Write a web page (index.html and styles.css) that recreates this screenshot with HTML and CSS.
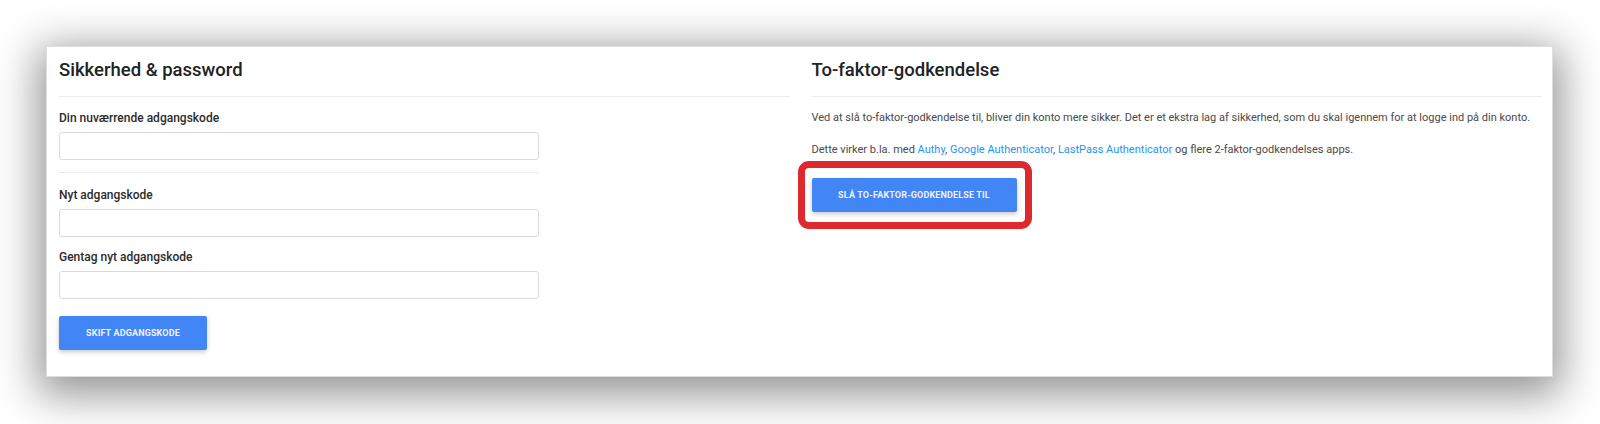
FILE: index.html
```html
<!DOCTYPE html>
<html lang="da">
<head>
<meta charset="utf-8">
<title>Sikkerhed</title>
<link rel="stylesheet" href="styles.css">
</head>
<body>
<div class="page">
  <section class="card">
    <div class="col">
      <h2 class="col-title">Sikkerhed &amp; password</h2>
      <form class="pw-form">
        <div class="field">
          <label class="field-label" for="cur">Din nuværrende adgangskode</label>
          <input class="field-input" id="cur" type="password">
        </div>
        <hr class="field-sep">
        <div class="field">
          <label class="field-label" for="new">Nyt adgangskode</label>
          <input class="field-input" id="new" type="password">
        </div>
        <div class="field">
          <label class="field-label" for="rep">Gentag nyt adgangskode</label>
          <input class="field-input" id="rep" type="password">
        </div>
        <button class="btn btn-pw" type="button">Skift adgangskode</button>
      </form>
    </div>
    <div class="col">
      <h2 class="col-title">To-faktor-godkendelse</h2>
      <p class="text">Ved at slå to-faktor-godkendelse til, bliver din konto mere sikker. Det er et ekstra lag af sikkerhed, som du skal igennem for at logge ind på din konto.</p>
      <p class="text">Dette virker b.la. med <a href="#">Authy</a>, <a href="#">Google Authenticator</a>, <a href="#">LastPass Authenticator</a> og flere 2-faktor-godkendelses apps.</p>
      <div class="highlight">
        <button class="btn btn-2fa" type="button">Slå to-faktor-godkendelse til</button>
        <span class="highlight-ring"></span>
      </div>
    </div>
  </section>
</div>
</body>
</html>
```

FILE: styles.css
```css
* {
  box-sizing: border-box;
}

html, body {
  margin: 0;
  background: #ffffff;
}

body {
  font-family: Roboto, "Noto Sans", Arial, sans-serif;
  color: #333;
}

.page {
  min-height: 100vh;
  padding: 46px 47px 0 46px;
}

.card {
  display: grid;
  grid-template-columns: 1fr 1fr;
  column-gap: 22px;
  height: 331px;
  padding: 11px 10px 0 12px;
  background: #fff;
  border: 1px solid #dedede;
  box-shadow: 0 10px 40px 8px rgba(0, 0, 0, 0.42);
}

.col {
  display: flex;
  flex-direction: column;
  align-items: flex-start;
  min-width: 0;
}

.col-title {
  align-self: stretch;
  margin: 0;
  padding-bottom: 14px;
  border-bottom: 1px solid #ececec;
  font-size: 18.5px;
  line-height: 24px;
  font-weight: 500;
  color: #222;
}

.pw-form {
  display: flex;
  flex-direction: column;
  align-items: flex-start;
  padding-top: 13px;
  width: 480px;
}

.field {
  display: flex;
  flex-direction: column;
  width: 100%;
}

.field + .field {
  margin-top: 12px;
}

.field-label {
  font-size: 12px;
  line-height: 16px;
  font-weight: 500;
  color: #2b2b2b;
  margin-bottom: 6px;
}

.field-input {
  width: 100%;
  height: 28px;
  border: 1px solid #d9dbe0;
  border-radius: 3px;
  background: #fff;
  font: inherit;
  padding: 0 8px;
}

.field-sep {
  width: 100%;
  margin: 12px 0 14px;
  border: 0;
  border-top: 1px solid #ececec;
}

.btn {
  height: 34px;
  padding: 0;
  border: 0;
  border-radius: 2px;
  background: #4285f4;
  color: #eef1ff;
  font-family: Roboto, "Noto Sans", Arial, sans-serif;
  font-size: 9px;
  font-weight: 700;
  letter-spacing: 0.15px;
  white-space: nowrap;
  text-transform: uppercase;
  box-shadow: 0 2px 5px rgba(0, 0, 0, 0.22);
  cursor: pointer;
}

.btn-pw {
  width: 148px;
  margin-top: 17px;
}

.text {
  margin: 12px 0 0;
  font-size: 11px;
  line-height: 18px;
  color: #4a4a4a;
  white-space: nowrap;
}

.text + .text {
  margin-top: 14px;
}

.text a {
  color: #2196f3;
  text-decoration: none;
}

.highlight {
  position: relative;
  margin-top: 19px;
}

.btn-2fa {
  width: 205px;
}

/* red outline drawn around the call-to-action */
.highlight-ring {
  position: absolute;
  top: -17px;
  right: -15px;
  bottom: -17px;
  left: -14px;
  border: 7px solid #dd2a2e;
  border-radius: 11px;
  pointer-events: none;
}
```
